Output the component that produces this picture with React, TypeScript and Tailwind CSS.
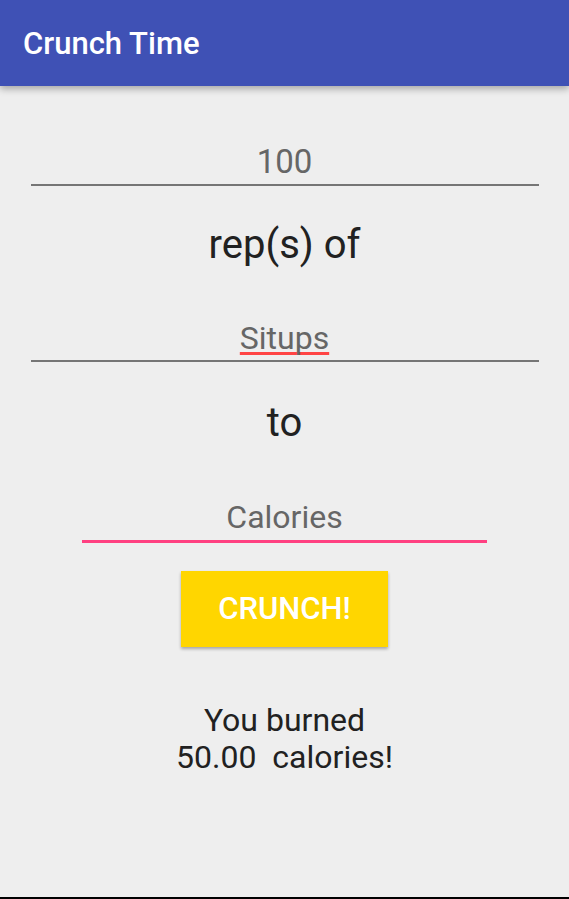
export default function App() {
  return (
    <div
      className="relative flex h-[899px] w-[569px] flex-col overflow-hidden bg-[#eeeeee] text-[#212121]"
      style={{ fontFamily: "Roboto, 'Noto Sans', sans-serif" }}
    >
      {/* Toolbar */}
      <div className="z-10 flex h-[86px] shrink-0 items-center bg-[#3f51b5] pl-[23px] shadow-[0_3px_7px_rgba(0,0,0,0.3)]">
        <h1 className="text-[31px] font-medium leading-none text-white">Crunch Time</h1>
      </div>

      <div className="flex flex-col items-center">
        {/* Reps input */}
        <div className="mt-[57px] flex h-[43px] w-[508px] items-start justify-center border-b-2 border-[#757575]">
          <span className="text-[33px] leading-[38px] text-[#666666]">100</span>
        </div>

        <p className="mt-[35px] text-[40px] leading-[48px]">rep(s) of</p>

        {/* Exercise input */}
        <div className="mt-[50px] flex h-[43px] w-[508px] items-start justify-center border-b-2 border-[#757575]">
          <span className="text-[32px] leading-[38px] text-[#666666] underline decoration-[#ff4444] decoration-[3px] underline-offset-[3px] [text-decoration-skip-ink:none]">
            Situps
          </span>
        </div>

        <p className="mt-[37px] text-[40px] leading-[48px]">to</p>

        {/* Calories hint input */}
        <div className="mt-[51px] flex h-[45px] w-[405px] items-start justify-center border-b-[3px] border-[#ff4081]">
          <span className="text-[32px] leading-[38px] text-[#666666]">Calories</span>
        </div>

        <button className="mt-[28px] flex h-[76px] w-[207px] items-center justify-center bg-[#ffd600] text-[31px] font-medium text-white shadow-[0_2px_3px_rgba(0,0,0,0.3)]">
          CRUNCH!
        </button>

        <p className="mt-[55px] text-center text-[32px] leading-[37px]">
          You burned
          <br />
          50.00&nbsp; calories!
        </p>
      </div>

      <div className="absolute bottom-0 left-0 h-[2px] w-full bg-black" />
    </div>
  )
}
